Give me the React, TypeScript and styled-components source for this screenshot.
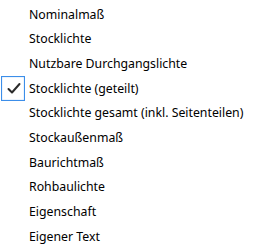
import React from 'react';
import styled, { createGlobalStyle } from 'styled-components';

const GlobalStyle = createGlobalStyle`
  html, body {
    margin: 0;
    padding: 0;
    background: #ffffff;
  }
`;

const items = [
  { label: 'Nominalmaß' },
  { label: 'Stocklichte' },
  { label: 'Nutzbare Durchgangslichte' },
  { label: 'Stocklichte (geteilt)', checked: true },
  { label: 'Stocklichte gesamt (inkl. Seitenteilen)' },
  { label: 'Stockaußenmaß' },
  { label: 'Baurichtmaß' },
  { label: 'Rohbaulichte' },
  { label: 'Eigenschaft' },
  { label: 'Eigener Text' },
];

const Menu = styled.ul`
  list-style: none;
  margin: 0;
  padding: 2px 0 0 0;
  width: 257px;
  font-family: 'Noto Sans', 'Open Sans', sans-serif;
  font-size: 12.3px;
  color: #000000;
`;

const Row = styled.li`
  display: flex;
  align-items: center;
  height: 24.67px;
  white-space: nowrap;
`;

const CheckSlot = styled.div`
  flex: none;
  width: 24px;
  height: 25px;
  margin: 0 4px 0 1px;
  display: flex;
`;

const Label = styled.span``;

const CheckIcon = () => (
  <svg width='24' height='25' viewBox='0 0 24 25'>
    <rect x='0.5' y='0.5' width='23' height='24' fill='none' stroke='#3c8ee9' strokeWidth='1.2' />
    <path d='M7.5 13 L11 16.5 L18.5 8' fill='none' stroke='#2b2b2b' strokeWidth='2' strokeLinecap='round' strokeLinejoin='round' />
  </svg>
);

const App = () => {
  return (
    <>
      <GlobalStyle />
      <Menu>
        {items.map((item) => (
          <Row key={item.label}>
            <CheckSlot>{item.checked && <CheckIcon />}</CheckSlot>
            <Label>{item.label}</Label>
          </Row>
        ))}
      </Menu>
    </>
  );
};

export default App;
